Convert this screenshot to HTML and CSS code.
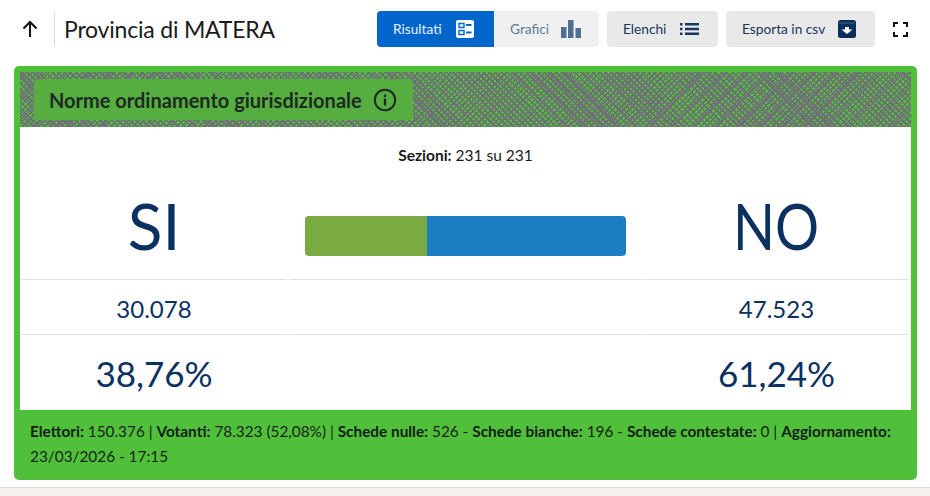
FILE: index.html
```html
<!DOCTYPE html>
<html lang="en">
<head>
  <meta charset="UTF-8">
  <title>Provincia di MATERA</title>
  <link rel="stylesheet" href="styles.css">
</head>
<body>

  <header class="toolbar">
    <button class="back" aria-label="Indietro">
      <svg width="18" height="18" viewBox="0 0 18 18"><path d="M9 17V2M2.5 8.5 9 2l6.500 6.500" fill="none" stroke="#111" stroke-width="2"/></svg>
    </button>
    <h1>Provincia di MATERA</h1>

    <div class="actions">
      <div class="btn-group">
        <button class="btn active">Risultati
          <svg width="18" height="18" viewBox="0 0 18 18"><rect width="18" height="18" rx="2" fill="#fff"/><path d="M3 3.500h5v4H3zM3 10.500h5v4H3z" fill="none" stroke="#06c" stroke-width="1.400"/><path d="M10 5h5.500M10 12.500h5.500" stroke="#06c" stroke-width="2"/></svg>
        </button>
        <button class="btn muted">Grafici
          <svg width="20" height="18" viewBox="0 0 20 18"><path d="M0 7h5.500v11H0zM7 0h5.500v18H7zM14.500 8H20v10h-5.500z" fill="#4d6f90"/></svg>
        </button>
      </div>
      <button class="btn elenchi">Elenchi
        <svg width="19" height="12" viewBox="0 0 19 12"><path d="M0 0h2.500v2.500H0zM0 4.700h2.500v2.500H0zM0 9.400h2.500v2.500H0zM5 0h14v2.500H5zM5 4.700h14v2.500H5zM5 9.400h14v2.500H5z" fill="#17375e"/></svg>
      </button>
      <button class="btn esporta">Esporta in csv
        <svg width="18" height="18" viewBox="0 0 18 18"><rect width="18" height="18" rx="2.500" fill="#0b2f5c"/><path d="M1 3h16" stroke="#4d6f90" stroke-width=".8"/><path d="M7 7h4v2.500h3.500L9 14 3.500 9.500H7z" fill="#fff"/></svg>
      </button>
    </div>

    <button class="fullscreen" aria-label="Schermo intero">
      <svg width="15" height="15" viewBox="0 0 15 15"><path d="M1 5V1h4M10 1h4v4M14 10v4h-4M5 14H1v-4" fill="none" stroke="#111" stroke-width="2"/></svg>
    </button>
  </header>

  <section class="card">
    <div class="card-head">
      <div class="badge">
        <span>Norme ordinamento giurisdizionale</span>
        <svg width="24" height="24" viewBox="0 0 24 24"><circle cx="12" cy="12" r="10.200" fill="none" stroke="#1d2a22" stroke-width="2"/><path d="M10.800 10.500h2.400v7h-2.400zM10.800 6.500h2.400v2.400h-2.400z" fill="#1d2a22"/></svg>
      </div>
    </div>

    <div class="card-body">
      <p class="sezioni"><b>Sezioni:</b> 231 su 231</p>
      <div class="results">
        <div class="cell big">SI</div>
        <div class="cell bar-cell">
          <div class="bar">
            <div class="bar-si" style="width: 38%"></div>
            <div class="bar-no" style="width: 62%"></div>
          </div>
        </div>
        <div class="cell big"><span class="narrow">NO</span></div>

        <div class="cell votes line">30.078</div>
        <div class="cell line"></div>
        <div class="cell votes line">47.523</div>

        <div class="cell percent line">38,76%</div>
        <div class="cell line"></div>
        <div class="cell percent line">61,24%</div>
      </div>
    </div>

    <div class="card-foot">
      <b>Elettori:</b> 150.376 | <b>Votanti:</b> 78.323 (52,08%) | <b>Schede nulle:</b> 526 - <b>Schede bianche:</b> 196 - <b>Schede contestate:</b> 0 | <b>Aggiornamento:</b> 23/03/2026 - 17:15
    </div>
  </section>

  <div class="page-end"></div>

</body>
</html>
```

FILE: styles.css
```css
body {
  font-family: 'Lato', sans-serif;
  margin: 0;
  padding: 0;
  background: #fff;
  color: #17324d;
  height: 496px;
  overflow: hidden;
}

button {
  font-family: inherit;
  border: none;
  background: none;
  padding: 0;
  cursor: pointer;
}

/* Top bar */
.toolbar {
  display: flex;
  align-items: center;
  height: 36px;
  padding: 11px 22px 19px 21px;
}

.back {
  display: flex;
  align-items: center;
  width: 34px;
  height: 34px;
  border-right: 1px solid #dcdcdc;
}

h1 {
  margin: 0 0 0 9px;
  font-size: 23px;
  font-weight: 400;
  color: #1a1a1a;
  letter-spacing: -0.2px;
}

.actions {
  display: flex;
  gap: 8px;
  margin-left: auto;
}

.btn-group {
  display: flex;
}

.btn {
  display: flex;
  align-items: center;
  justify-content: space-between;
  height: 36px;
  padding: 0 19px 1px 16px;
  box-sizing: border-box;
  font-size: 13.700px;
  color: #17375e;
  background: #e9e9ea;
  border-radius: 4px;
}

.btn svg {
  margin-top: 1px;
}

.btn.active {
  width: 117px;
  padding-right: 20px;
  background: #06c;
  color: #e8f1fb;
  border-radius: 4px 0 0 4px;
}

.btn.muted {
  width: 105px;
  padding-right: 18px;
  background: #f0f0f1;
  color: #5c7a99;
  border-radius: 0 4px 4px 0;
}

.elenchi {
  width: 111px;
}

.esporta {
  width: 149px;
}

.fullscreen {
  display: flex;
  margin-left: 18px;
}

/* Card */
.card {
  margin: 0 13px 0 14px;
  height: 414px;
  display: flex;
  flex-direction: column;
  background: #50c03a;
  border-radius: 5px;
  box-sizing: border-box;
  padding: 6px 6px 0;
}

.card-head {
  height: 55px;
  padding: 7px 14px;
  box-sizing: border-box;
  background-color: #50c03a;
  background-image:
    repeating-linear-gradient(45deg, #6f7274 0 1.800px, transparent 1.800px 4.300px),
    repeating-linear-gradient(-45deg, #6f7274 0 1.600px, transparent 1.600px 3.900px),
    repeating-linear-gradient(45deg, transparent 0 11px, #73777a 11px 12.500px),
    repeating-linear-gradient(-45deg, transparent 0 14px, #73777a 14px 15.500px);
}

.badge {
  display: flex;
  align-items: center;
  justify-content: space-between;
  width: 379px;
  height: 41px;
  box-sizing: border-box;
  padding: 0 16px 0 15px;
  background: #57ae40;
  border-radius: 4px;
  font-size: 20px;
  font-weight: 700;
  color: #1d2a22;
}

.card-body {
  flex: 1;
  background: #fff;
  display: flex;
  flex-direction: column;
}

.sezioni {
  margin: 0;
  height: 48px;
  padding-top: 19px;
  box-sizing: border-box;
  text-align: center;
  font-size: 15.500px;
  color: #1a1a1a;
}

.results {
  flex: 1;
  display: grid;
  grid-template-columns: 266px 353px 265px;
  grid-template-rows: 104px 55px 76px;
  column-gap: 2px;
  padding: 0 2px 0 1px;
}

.cell {
  display: flex;
  align-items: center;
  justify-content: center;
  color: #0b3161;
}

.line {
  border-top: 1px solid #e0e0e0;
}

.big {
  font-size: 64px;
  padding-bottom: 4px;
}

.narrow {
  display: inline-block;
  transform: scaleX(0.86);
}

.votes {
  font-size: 24px;
  padding-top: 2px;
}

.percent {
  font-size: 35px;
}

.bar-cell {
  padding-top: 18px;
}

.bar {
  display: flex;
  width: 321px;
  height: 40px;
  border-radius: 4px;
  overflow: hidden;
}

.bar-si {
  background: #7aab42;
}

.bar-no {
  background: #1c7dc3;
}

.card-foot {
  height: 70px;
  box-sizing: border-box;
  padding: 9px 10px;
  font-size: 15.350px;
  line-height: 25px;
  color: #17241b;
}

.card-foot b {
  color: #14201a;
}

.page-end {
  height: 9px;
  margin-top: 7px;
  background: #f2f1ec;
  border-top: 1px solid #dcdcdc;
}
```
